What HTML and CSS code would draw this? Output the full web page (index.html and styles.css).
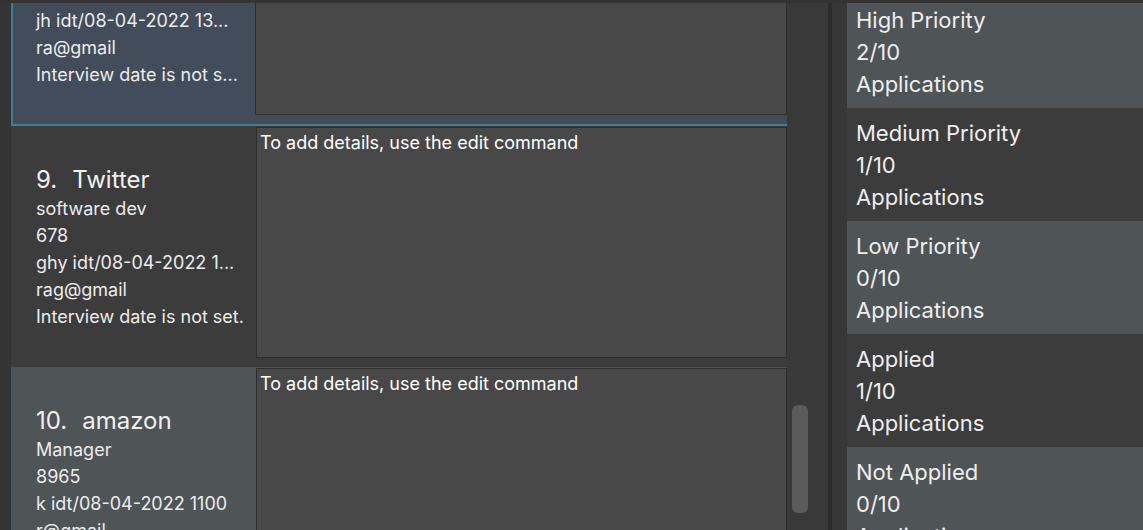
FILE: index.html
```html
<!DOCTYPE html>
<html>
<head>
<meta charset="utf-8">
<link rel="stylesheet" href="styles.css">
</head>
<body>
<div class="app">
  <div class="topbar"></div>
  <div class="main">
    <div class="gutter"></div>
    <div class="list">
      <div class="list-inner">
        <div class="card selected">
          <div class="info">
            <div class="title"><span>8.</span><span>Google</span></div>
            <div class="line">software dev</div>
            <div class="line">1234</div>
            <div class="line">jh idt/08-04-2022 13...</div>
            <div class="line">ra@gmail</div>
            <div class="line">Interview date is not s...</div>
          </div>
          <div class="details"></div>
        </div>
        <div class="card dark">
          <div class="info">
            <div class="title"><span>9.</span><span>Twitter</span></div>
            <div class="line">software dev</div>
            <div class="line">678</div>
            <div class="line">ghy idt/08-04-2022 1...</div>
            <div class="line">rag@gmail</div>
            <div class="line">Interview date is not set.</div>
          </div>
          <div class="details">To add details, use the edit command</div>
        </div>
        <div class="card light">
          <div class="info">
            <div class="title"><span>10.</span><span>amazon</span></div>
            <div class="line">Manager</div>
            <div class="line">8965</div>
            <div class="line">k idt/08-04-2022 1100</div>
            <div class="line">r@gmail</div>
            <div class="line">Interview date is not set.</div>
          </div>
          <div class="details">To add details, use the edit command</div>
        </div>
      </div>
    </div>
    <div class="scroll"><div class="thumb"></div></div>
    <div class="divider"></div>
    <div class="spacer"></div>
    <div class="stats">
      <div class="stats-inner">
        <div class="stat light"><div>High Priority</div><div>2/10</div><div>Applications</div></div>
        <div class="stat dark"><div>Medium Priority</div><div>1/10</div><div>Applications</div></div>
        <div class="stat light"><div>Low Priority</div><div>0/10</div><div>Applications</div></div>
        <div class="stat dark"><div>Applied</div><div>1/10</div><div>Applications</div></div>
        <div class="stat light"><div>Not Applied</div><div>0/10</div><div>Applications</div></div>
      </div>
    </div>
  </div>
</div>
</body>
</html>
```

FILE: styles.css
```css
* { box-sizing: border-box; }
html, body {
  margin: 0;
  padding: 0;
  width: 1143px;
  height: 530px;
  overflow: hidden;
  background: #363636;
  font-family: "Inter", "Open Sans", sans-serif;
}
.app {
  display: flex;
  flex-direction: column;
  width: 1143px;
  height: 530px;
}
.topbar {
  height: 3px;
  flex: none;
  background: #333333;
}
.main {
  display: flex;
  height: 527px;
  overflow: hidden;
}
.gutter {
  width: 11px;
  flex: none;
  background: #343434;
}
.list {
  width: 776px;
  flex: none;
  overflow: hidden;
  background: #3c3c3c;
}
.list-inner {
  margin-top: -119px;
  display: flex;
  flex-direction: column;
}
.card {
  display: flex;
  height: 241px;
  padding: 1px 0 9px 0;
}
.card.dark { background: #3c3c3c; }
.card.light { background: #4f5457; }
.card.selected {
  height: 242px;
  background: #424c5b;
  border: 2px solid #3f7e92;
  border-right: none;
  padding: 0 0 9px 0;
}
.info {
  width: 245px;
  flex: none;
  padding: 10px 0 0 25px;
  display: flex;
  flex-direction: column;
  justify-content: center;
  color: #ececec;
  white-space: nowrap;
  overflow: hidden;
}
.selected .info {
  width: 242px;
  padding: 9px 0 0 23px;
}
.title {
  display: flex;
  gap: 15px;
  font-size: 24px;
  line-height: 30px;
  color: #f0f0f0;
}
.line {
  font-size: 18px;
  line-height: 27px;
}
.details {
  flex: 1;
  background: #484848;
  border: 1px solid #2e2e2e;
  color: #ffffff;
  font-size: 18px;
  line-height: 22px;
  padding: 4px 3px;
  white-space: nowrap;
}
.scroll {
  width: 41px;
  flex: none;
  background: #393939;
  padding: 402px 0 0 5px;
}
.thumb {
  width: 16px;
  height: 108px;
  border-radius: 6px;
  background: #5b5b5b;
}
.divider {
  width: 4px;
  flex: none;
  background: #2c2c2c;
}
.spacer {
  width: 15px;
  flex: none;
  background: #373737;
}
.stats {
  flex: 1;
  overflow: hidden;
  background: #373737;
}
.stats-inner {
  margin-top: -8px;
  display: flex;
  flex-direction: column;
}
.stat {
  height: 113px;
  flex: none;
  padding: 9px 0 0 9px;
  font-size: 22px;
  line-height: 32px;
  color: #eeeeee;
}
.stat.light { background: #4f5457; }
.stat.dark { background: #3c3c3d; }
```
